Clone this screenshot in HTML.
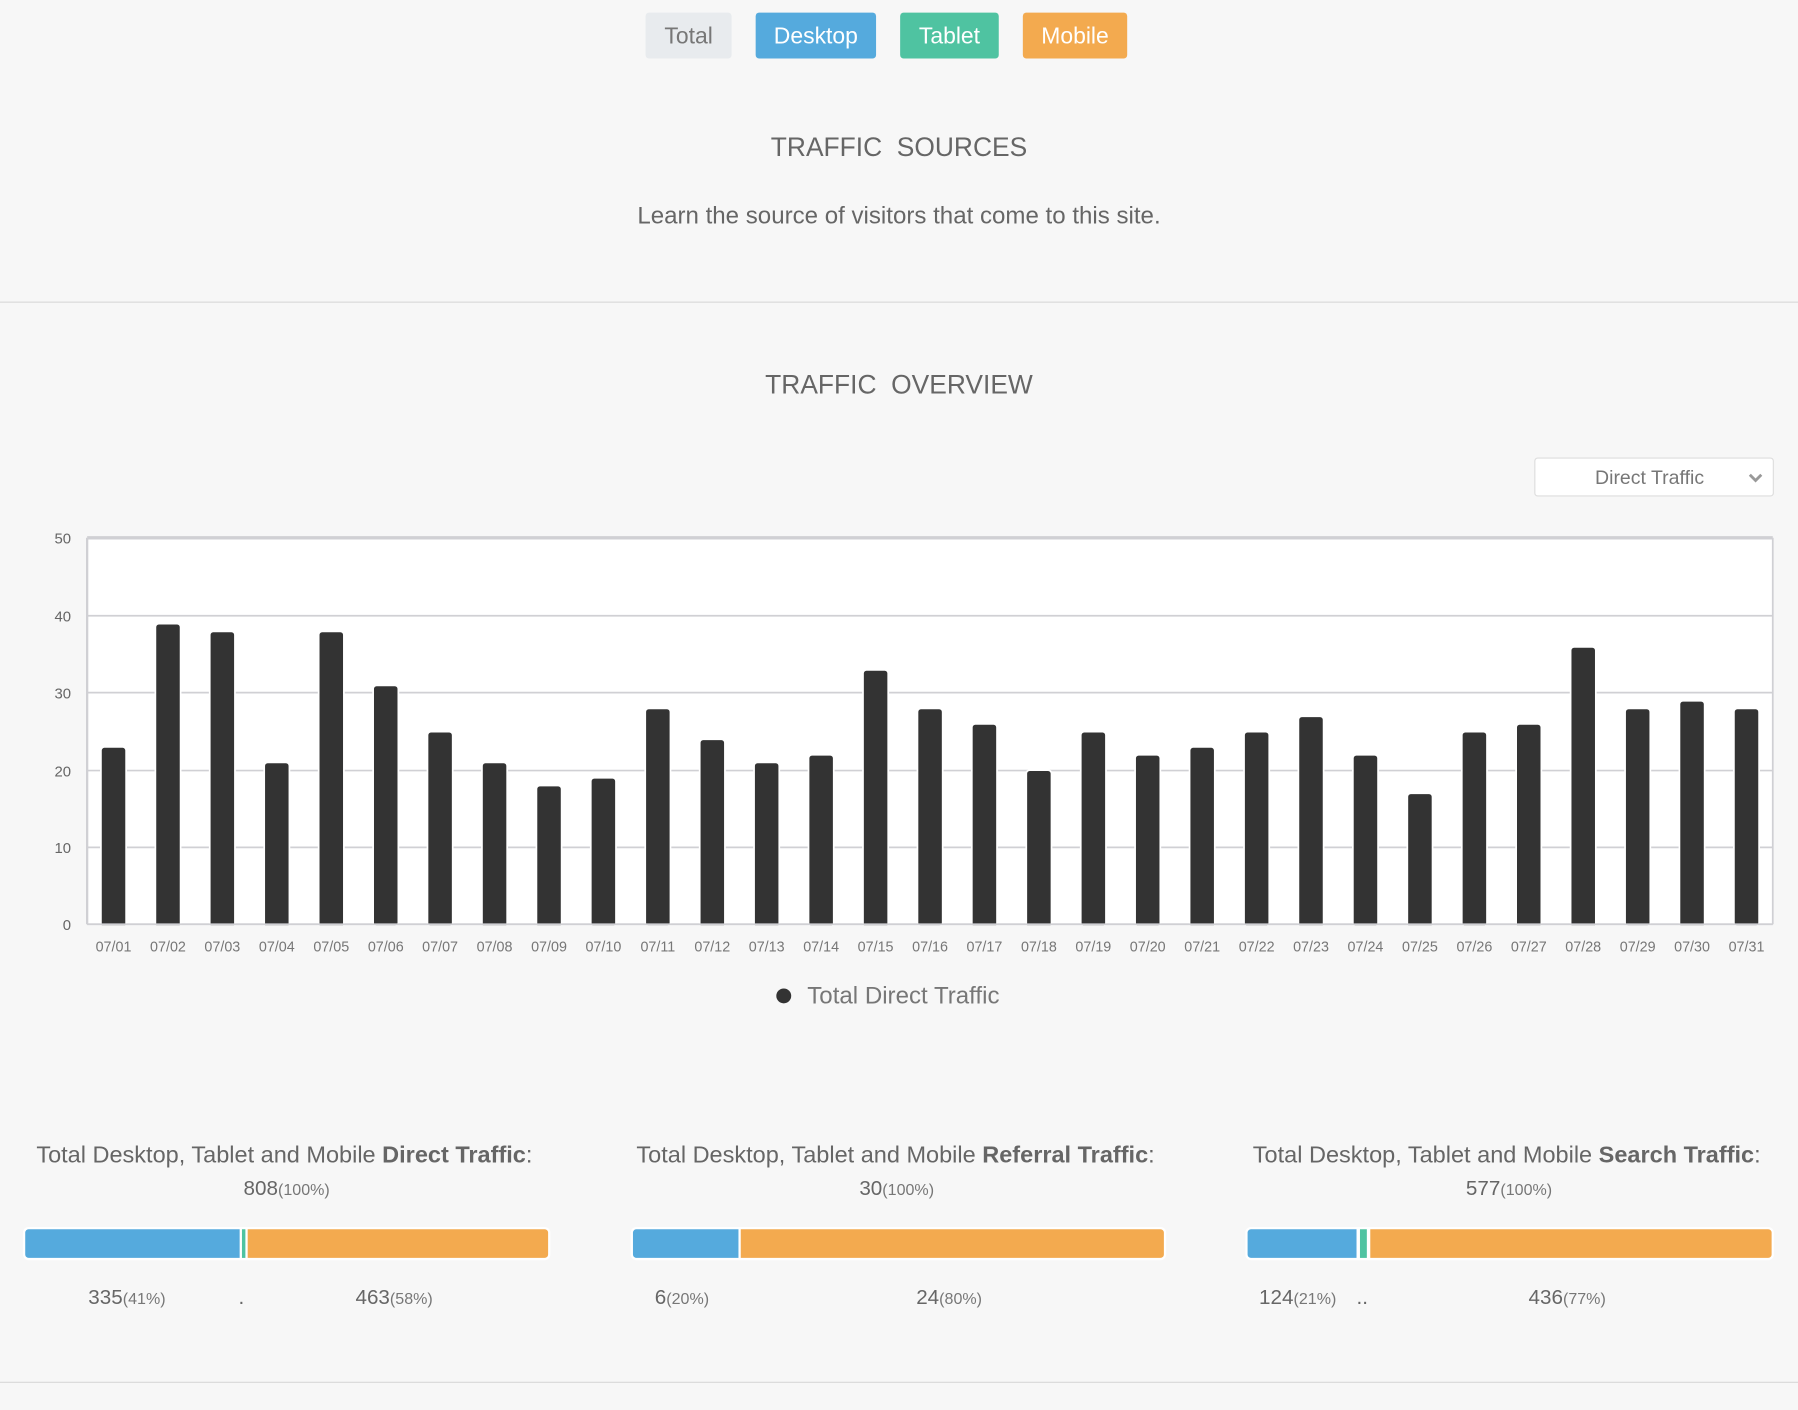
<!DOCTYPE html>
<html><head><meta charset="utf-8"><style>
html,body{margin:0;padding:0;background:#f7f7f7;width:1798px;height:1410px;overflow:hidden}
#w{position:absolute;left:0;top:0;width:1568px;height:1230px;transform:scale(1.14668);transform-origin:0 0;font-family:"Liberation Sans",sans-serif;color:#666}
.a{position:absolute}
.btn{position:absolute;top:11px;height:40px;line-height:42px;border-radius:3px;text-align:center;font-size:20px;color:#fff}
.c{position:absolute;text-align:center;white-space:nowrap}
.hr{position:absolute;left:0;width:1568px;height:1px;background:#d8d8d8}
.num{font-size:18px;color:#666}.num small{font-size:14px;color:#777}
.bar{position:absolute;top:1070px;height:29px;background:#fff;border-radius:5px}
.bar div{position:absolute;top:2px;height:25px}
</style></head><body><div id="w">
<div class="btn" style="left:563px;width:75px;background:#e8ebee;color:#777">Total</div>
<div class="btn" style="left:659px;width:105px;background:#55aadd">Desktop</div>
<div class="btn" style="left:785px;width:86px;background:#4fc3a1">Tablet</div>
<div class="btn" style="left:892px;width:91px;background:#f3aa4f">Mobile</div>
<div class="c" style="left:0;width:1568px;top:115px;font-size:23px;letter-spacing:0">TRAFFIC&nbsp; SOURCES</div>
<div class="c" style="left:0;width:1568px;top:177px;font-size:21px">Learn the source of visitors that come to this site.</div>
<div class="hr" style="top:263px"></div>
<div class="c" style="left:0;width:1568px;top:322px;font-size:23px;letter-spacing:0">TRAFFIC&nbsp; OVERVIEW</div>
<div class="a" style="left:1338px;top:399px;width:207px;height:32px;background:#fff;border:1px solid #ddd;border-radius:3px;font-size:17px;line-height:34px;color:#777"><span style="position:absolute;left:52px">Direct Traffic</span><svg class="a" style="left:186px;top:13px" width="12" height="8" viewBox="0 0 12 8"><path d="M1 1 L6 6 L11 1" stroke="#999" stroke-width="2.5" fill="none"/></svg></div>
<svg class="a" style="left:0;top:450px" width="1568" height="400" viewBox="0 450 1568 400" font-family="Liberation Sans,sans-serif">
<rect x="76" y="469" width="1470" height="337" fill="#fff"/>
<g stroke="#d0d0d4" stroke-width="1.5"><line x1="76" y1="469" x2="1546" y2="469" stroke-width="3"/><line x1="76" y1="537" x2="1546" y2="537"/><line x1="76" y1="604" x2="1546" y2="604"/><line x1="76" y1="672" x2="1546" y2="672"/><line x1="76" y1="739" x2="1546" y2="739"/><line x1="76" y1="806" x2="1546" y2="806"/><line x1="76" y1="469" x2="76" y2="806" stroke-width="2"/><line x1="1546" y1="469" x2="1546" y2="806"/></g>
<g fill="#333" stroke="#fff" stroke-width="1.5">
<rect x="88" y="651.4" width="22" height="160" rx="3"/><rect x="135.5" y="543.9" width="22" height="270" rx="3"/><rect x="182.9" y="550.6" width="22" height="260" rx="3"/><rect x="230.4" y="664.9" width="22" height="150" rx="3"/><rect x="277.9" y="550.6" width="22" height="260" rx="3"/><rect x="325.4" y="597.7" width="22" height="210" rx="3"/><rect x="372.8" y="638" width="22" height="170" rx="3"/><rect x="420.3" y="664.9" width="22" height="150" rx="3"/><rect x="467.8" y="685" width="22" height="130" rx="3"/><rect x="515.2" y="678.3" width="22" height="130" rx="3"/><rect x="562.7" y="617.8" width="22" height="190" rx="3"/><rect x="610.2" y="644.7" width="22" height="170" rx="3"/><rect x="657.6" y="664.9" width="22" height="150" rx="3"/><rect x="705.1" y="658.2" width="22" height="150" rx="3"/><rect x="752.6" y="584.2" width="22" height="230" rx="3"/><rect x="800.1" y="617.8" width="22" height="190" rx="3"/><rect x="847.5" y="631.3" width="22" height="180" rx="3"/><rect x="895" y="671.6" width="22" height="140" rx="3"/><rect x="942.5" y="638" width="22" height="170" rx="3"/><rect x="989.9" y="658.2" width="22" height="150" rx="3"/><rect x="1037.4" y="651.4" width="22" height="160" rx="3"/><rect x="1084.9" y="638" width="22" height="170" rx="3"/><rect x="1132.3" y="624.6" width="22" height="190" rx="3"/><rect x="1179.8" y="658.2" width="22" height="150" rx="3"/><rect x="1227.3" y="691.8" width="22" height="120" rx="3"/><rect x="1274.8" y="638" width="22" height="170" rx="3"/><rect x="1322.2" y="631.3" width="22" height="180" rx="3"/><rect x="1369.7" y="564.1" width="22" height="250" rx="3"/><rect x="1417.2" y="617.8" width="22" height="190" rx="3"/><rect x="1464.6" y="611.1" width="22" height="200" rx="3"/><rect x="1512.1" y="617.8" width="22" height="190" rx="3"/>
</g>
<rect x="70" y="806.8" width="1498" height="50" fill="#f7f7f7"/>
<line x1="76" y1="806" x2="1546" y2="806" stroke="#d0d0d4" stroke-width="1.5"/>
<g font-size="13" fill="#666" text-anchor="end"><text x="62" y="474">50</text><text x="62" y="542">40</text><text x="62" y="609">30</text><text x="62" y="677">20</text><text x="62" y="744">10</text><text x="62" y="811">0</text></g>
<g font-size="12.5" fill="#777" text-anchor="middle">
<text x="99" y="830">07/01</text><text x="146.5" y="830">07/02</text><text x="193.9" y="830">07/03</text><text x="241.4" y="830">07/04</text><text x="288.9" y="830">07/05</text><text x="336.4" y="830">07/06</text><text x="383.8" y="830">07/07</text><text x="431.3" y="830">07/08</text><text x="478.8" y="830">07/09</text><text x="526.2" y="830">07/10</text><text x="573.7" y="830">07/11</text><text x="621.2" y="830">07/12</text><text x="668.6" y="830">07/13</text><text x="716.1" y="830">07/14</text><text x="763.6" y="830">07/15</text><text x="811.1" y="830">07/16</text><text x="858.5" y="830">07/17</text><text x="906" y="830">07/18</text><text x="953.5" y="830">07/19</text><text x="1000.9" y="830">07/20</text><text x="1048.4" y="830">07/21</text><text x="1095.9" y="830">07/22</text><text x="1143.3" y="830">07/23</text><text x="1190.8" y="830">07/24</text><text x="1238.3" y="830">07/25</text><text x="1285.8" y="830">07/26</text><text x="1333.2" y="830">07/27</text><text x="1380.7" y="830">07/28</text><text x="1428.2" y="830">07/29</text><text x="1475.6" y="830">07/30</text><text x="1523.1" y="830">07/31</text>
</g>
</svg>
<div class="a" style="left:677px;top:862px;width:13px;height:13px;border-radius:50%;background:#333"></div>
<div class="a" style="left:704px;top:857px;font-size:21px;color:#777">Total Direct Traffic</div>

<div class="c" style="left:-2px;width:500px;top:996px;font-size:20.5px">Total Desktop, Tablet and Mobile <b>Direct Traffic</b>:</div>
<div class="c num" style="left:0;width:500px;top:1026px">808<small>(100%)</small></div>
<div class="c" style="left:531px;width:500px;top:996px;font-size:20.5px">Total Desktop, Tablet and Mobile <b>Referral Traffic</b>:</div>
<div class="c num" style="left:532px;width:500px;top:1026px">30<small>(100%)</small></div>
<div class="c" style="left:1064px;width:500px;top:996px;font-size:20.5px">Total Desktop, Tablet and Mobile <b>Search Traffic</b>:</div>
<div class="c num" style="left:1066px;width:500px;top:1026px">577<small>(100%)</small></div>

<div class="bar" style="left:20px;width:460px"><div style="left:2px;width:187px;background:#55aadd;border-radius:3px 0 0 3px"></div><div style="left:191px;width:3px;background:#4fc3a1"></div><div style="left:196px;width:262px;background:#f3aa4f;border-radius:0 3px 3px 0"></div></div>
<div class="bar" style="left:550px;width:467px"><div style="left:2px;width:92px;background:#55aadd;border-radius:3px 0 0 3px"></div><div style="left:96px;width:369px;background:#f3aa4f;border-radius:0 3px 3px 0"></div></div>
<div class="bar" style="left:1086px;width:461px"><div style="left:2px;width:95px;background:#55aadd;border-radius:3px 0 0 3px"></div><div style="left:100px;width:6px;background:#4fc3a1"></div><div style="left:109px;width:350px;background:#f3aa4f;border-radius:0 3px 3px 0"></div></div>

<div class="a num" style="left:77px;top:1121px">335<small>(41%)</small></div>
<div class="a num" style="left:208px;top:1121px">.</div>
<div class="a num" style="left:310px;top:1121px">463<small>(58%)</small></div>
<div class="a num" style="left:571px;top:1121px">6<small>(20%)</small></div>
<div class="a num" style="left:799px;top:1121px">24<small>(80%)</small></div>
<div class="a num" style="left:1098px;top:1121px">124<small>(21%)</small></div>
<div class="a num" style="left:1183px;top:1121px">..</div>
<div class="a num" style="left:1333px;top:1121px">436<small>(77%)</small></div>
<div class="hr" style="top:1205px"></div>
</div></body></html>
